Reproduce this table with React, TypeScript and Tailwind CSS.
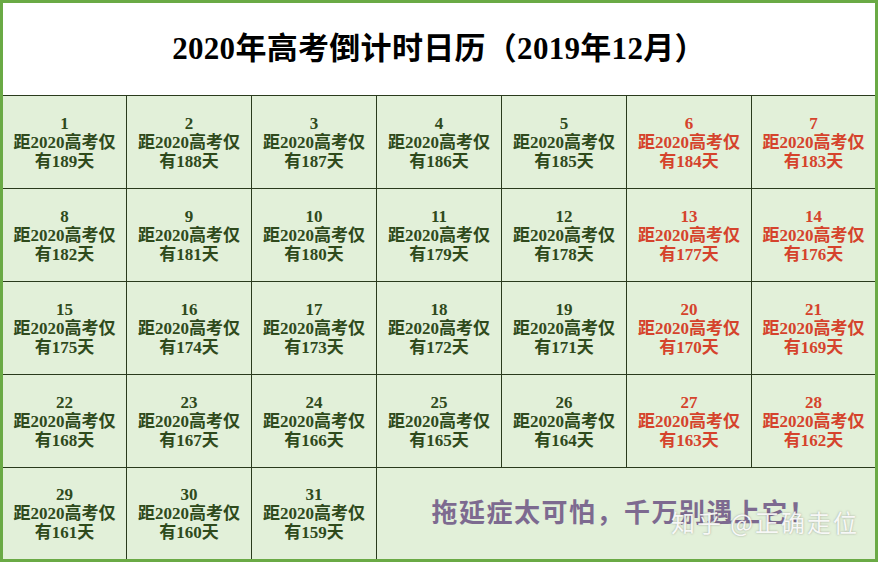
import React from 'react';

const FONT = { fontFamily: '"Liberation Serif", "Noto Sans CJK SC", serif' };

const days = Array.from({ length: 31 }, (_, i) => i + 1);

function DayCell({ day, col }: { day: number; col: number }) {
  const weekend = col >= 5;
  return (
    <div
      className={`flex flex-col items-center justify-center bg-[#e2f0d9] text-[17px] leading-[19px] font-bold ${
        weekend ? 'text-[#d5432c]' : 'text-[#2f4a1c]'
      }`}
    >
      <span>{day}</span>
      <span>距2020高考仅</span>
      <span>有{190 - day}天</span>
    </div>
  );
}

export default function App() {
  return (
    <div className="w-[880px] h-[562px] bg-white" style={FONT}>
      <div className="w-[878px] h-[562px] border-[3px] border-[#6aaa45] flex flex-col">
        {/* title */}
        <div className="h-[93px] shrink-0 bg-white border-b border-[#2a3b1d] flex items-center justify-center">
          <h1 className="text-[31px] font-bold text-black tracking-[0.3px]">
            2020年高考倒计时日历（2019年12月）
          </h1>
        </div>

        {/* calendar grid */}
        <div className="grid grid-cols-[123px_repeat(5,124px)_123px] grid-rows-[repeat(4,92px)_91px] gap-px bg-[#2a3b1d]">
          {days.map((d, i) => (
            <DayCell key={d} day={d} col={i % 7} />
          ))}
          <div className="col-span-4 relative bg-[#e2f0d9] flex items-center justify-center">
            <span className="text-[26px] font-bold text-[#7d6a90] tracking-[1.5px] pr-[4px]">
              拖延症太可怕，千万别遇上它！
            </span>
            <span
              className="absolute right-[16px] top-[36px] text-[24px] text-white/90 tracking-[2px]"
              style={{ fontFamily: '"Noto Sans CJK SC", sans-serif', textShadow: '0 0 2px rgba(90,90,90,0.55)' }}
            >
              知乎 @正确走位
            </span>
          </div>
        </div>
      </div>
    </div>
  );
}
